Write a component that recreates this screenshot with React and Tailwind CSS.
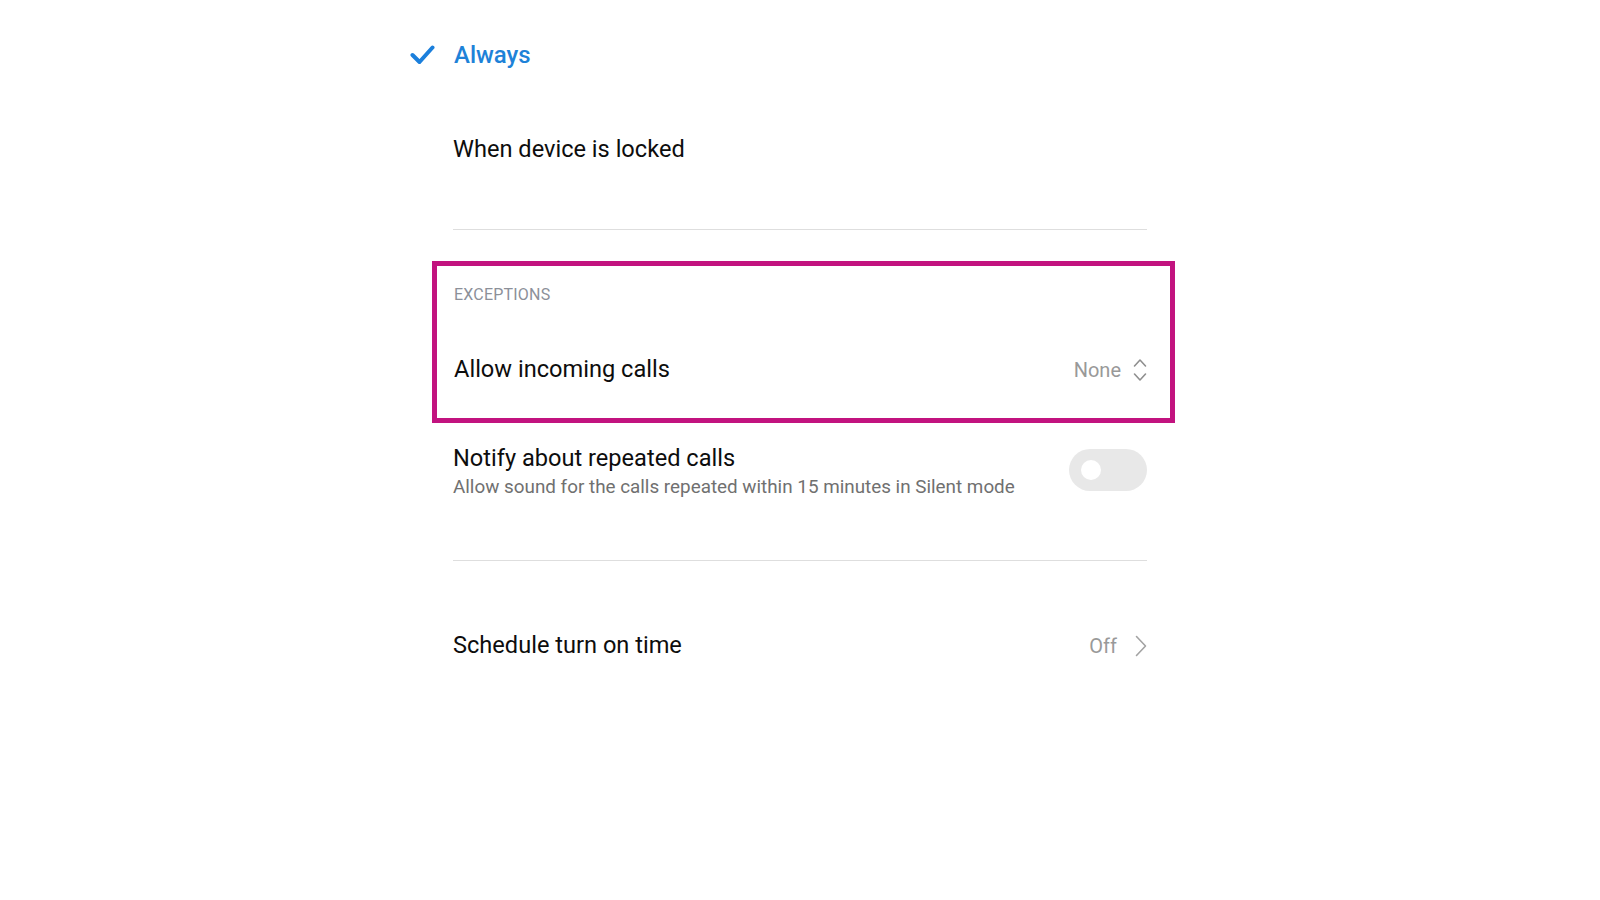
import React from 'react';

const UpDown = () => (
  <svg width="14" height="26" viewBox="0 0 14 26" fill="none" stroke="#8f8f8f" strokeWidth="1.6" strokeLinecap="round" strokeLinejoin="round">
    <polyline points="1.5,9 7,3 12.5,9" />
    <polyline points="1.5,17 7,23 12.5,17" />
  </svg>
);

const ChevronRight = () => (
  <svg width="12" height="22" viewBox="0 0 12 22" fill="none" stroke="#a3a3a3" strokeWidth="1.6" strokeLinecap="round" strokeLinejoin="round">
    <polyline points="1.5,1.5 10.5,11 1.5,20.5" />
  </svg>
);

const Check = () => (
  <svg width="25" height="20" viewBox="0 0 25 20" fill="none" stroke="#1b7fdc" strokeWidth="4" strokeLinecap="round" strokeLinejoin="round">
    <polyline points="2.5,10 9.5,17 22.5,2.5" />
  </svg>
);

const Toggle = () => (
  <div className="flex items-center w-[78px] h-[42px] rounded-full bg-[#e8e8e8] pl-[12px]">
    <div className="w-[20px] h-[20px] rounded-full bg-white" />
  </div>
);

export default function App() {
  return (
    <div className="min-h-screen bg-white font-['Roboto','Liberation_Sans',sans-serif] text-[#0d0d0d]">
      <div className="w-[694px] mx-auto">
        {/* selected option */}
        <div className="h-[110px] flex items-center -ml-[43px] gap-[19px]">
          <Check />
          <span className="text-[24px] font-medium text-[#1e82d8]">Always</span>
        </div>

        <div className="h-[79px] flex items-center">
          <span className="text-[23.6px]">When device is locked</span>
        </div>
        <div className="h-[40px]" />
        <div className="h-px bg-[#dedede]" />

        {/* exceptions, highlighted */}
        <div className="mt-[31px] -ml-[21px] w-[743px] border-[5px] border-[#c2137f]">
          <div className="h-[57px] flex items-center pl-[17px]">
            <span className="text-[16px] text-[#8c9099] tracking-[0.2px]">EXCEPTIONS</span>
          </div>
          <div className="h-[93px] flex items-center justify-between pl-[17px] pr-[23px]">
            <span className="text-[23.6px]">Allow incoming calls</span>
            <div className="flex items-center gap-[12px]">
              <span className="text-[20px] text-[#999999]">None</span>
              <UpDown />
            </div>
          </div>
          <div className="h-[2px]" />
        </div>

        <div className="h-[94px] flex items-center justify-between">
          <div className="flex flex-col pt-[4px]">
            <span className="text-[23.6px] leading-[30px]">Notify about repeated calls</span>
            <span className="text-[18.85px] text-[#707070] leading-[28px]">
              Allow sound for the calls repeated within 15 minutes in Silent mode
            </span>
          </div>
          <Toggle />
        </div>

        <div className="h-[43px]" />
        <div className="h-px bg-[#dedede]" />

        <div className="h-[170px] flex items-center justify-between">
          <span className="text-[23.6px]">Schedule turn on time</span>
          <div className="flex items-center gap-[18px]">
            <span className="text-[20px] text-[#999999]">Off</span>
            <ChevronRight />
          </div>
        </div>
      </div>
    </div>
  );
}
